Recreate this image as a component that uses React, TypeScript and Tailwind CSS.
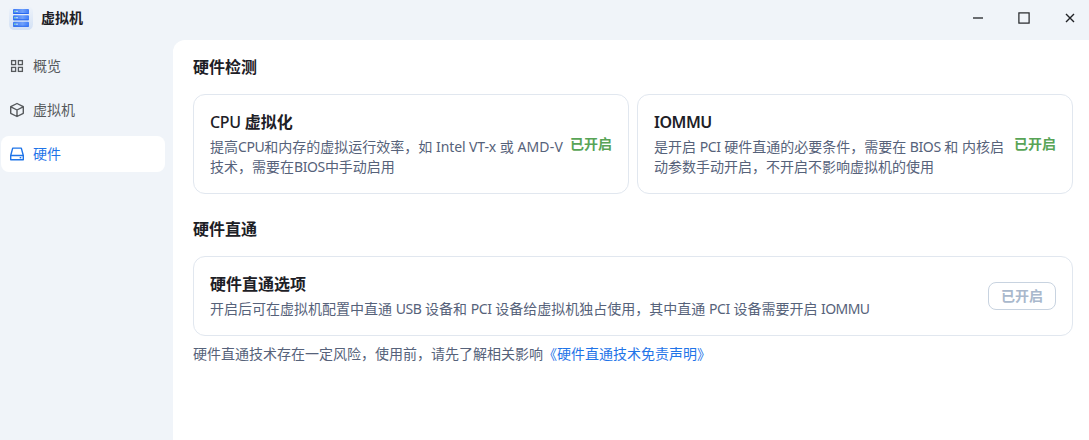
import type { ReactNode } from 'react';

const Latin = ({ children, className = '-tracking-[0.4px]' }: { children: ReactNode; className?: string }) => (
  <span className={`whitespace-nowrap ${className}`}>{children}</span>
);

function LogoIcon() {
  return (
    <svg className="size-6" viewBox="0 0 24 24">
      <defs>
        <linearGradient id="logo-bg" x1="0" y1="0" x2="0" y2="1">
          <stop offset="0" stopColor="#eef3fa" />
          <stop offset="1" stopColor="#d3e1f5" />
        </linearGradient>
        <linearGradient id="logo-bar" x1="0" y1="0" x2="1" y2="0">
          <stop offset="0" stopColor="#3c78f5" />
          <stop offset="0.6" stopColor="#6fa0fb" />
          <stop offset="1" stopColor="#3f7df8" />
        </linearGradient>
      </defs>
      <rect width="24" height="24" rx="5.5" fill="url(#logo-bg)" />
      {[3, 9.3, 15.8].map((y) => (
        <g key={y}>
          <rect x="4" y={y} width="16" height="4.9" rx="1" fill="url(#logo-bar)" />
          <rect x="4.2" y={y + 3.9} width="15.6" height="1" rx="0.5" fill="#2868f0" />
          <rect x="5.3" y={y + 1.7} width="1.4" height="1.4" fill="#8df0b0" />
          <rect x="7" y={y + 1.8} width="2" height="1.2" fill="#b9d1ff" />
        </g>
      ))}
    </svg>
  );
}

const GridIcon = () => (
  <svg className="size-4" viewBox="0 0 16 16" fill="none" stroke="currentColor" strokeWidth="1.3">
    <rect x="2.6" y="2.6" width="4" height="4" />
    <rect x="9.4" y="2.6" width="4" height="4" />
    <rect x="2.6" y="9.4" width="4" height="4" />
    <rect x="9.4" y="9.4" width="4" height="4" />
  </svg>
);

const BoxIcon = () => (
  <svg className="size-4" viewBox="0 0 16 16" fill="none" stroke="currentColor" strokeWidth="1.4" strokeLinejoin="round">
    <path d="M8 1.5 14.3 4.7v6.6L8 14.5 1.7 11.3V4.7ZM1.9 4.8 8 8l6.1-3.2M8 8v6.4" />
  </svg>
);

const DriveIcon = () => (
  <svg className="size-4" viewBox="0 0 16 16" fill="none" stroke="currentColor" strokeWidth="1.4" strokeLinejoin="round">
    <path d="M3.7 2.1h8.6l2 7.4v4.2H1.7V9.5ZM1.7 9.5h12.6" />
    <path d="M10.7 11.7h1.6" />
  </svg>
);

function NavItem({ icon, label, active }: { icon: ReactNode; label: string; active?: boolean }) {
  return (
    <a
      className={`flex h-9 items-center gap-2 rounded-lg pl-2 text-sm ${
        active ? 'bg-white text-[#1f74e8]' : 'text-[#56595c]'
      }`}
    >
      {icon}
      <span>{label}</span>
    </a>
  );
}

function Card({ title, children, action }: { title: ReactNode; children: ReactNode; action: ReactNode }) {
  return (
    <section className="flex items-center justify-between rounded-xl border border-[#e1e7ef] px-4 pt-[15px] pb-4">
      <div className="min-w-0">
        <h3 className="mb-[3px] text-base leading-6 font-bold text-[#1d2026]">{title}</h3>
        <p className="text-sm leading-5 whitespace-nowrap text-[#56627a]">{children}</p>
      </div>
      {action}
    </section>
  );
}

const Enabled = () => <span className="shrink-0 text-sm leading-5 font-bold text-[#58a456]">已开启</span>;

export default function App() {
  return (
    <div className="flex h-[440px] w-full flex-col overflow-hidden bg-[#f0f4f9] font-['Noto_Sans','Noto_Sans_CJK_SC',sans-serif]">
      <header className="flex h-10 shrink-0 items-center pr-[11px] pl-[9px]">
        <div className="flex flex-1 items-center gap-2 pb-1">
          <LogoIcon />
          <h1 className="text-sm font-bold text-[#1d2026]">虚拟机</h1>
        </div>
        <div className="flex items-center gap-[30px] pb-1 text-[#202226]">
          <svg className="size-4" viewBox="0 0 16 16" fill="none" stroke="currentColor">
            <path d="M3 8h10" strokeWidth="1.3" />
          </svg>
          <svg className="size-4" viewBox="0 0 16 16" fill="none" stroke="currentColor">
            <rect x="2.9" y="2.9" width="10.2" height="10.2" strokeWidth="1.2" />
          </svg>
          <svg className="size-4" viewBox="0 0 16 16" fill="none" stroke="currentColor">
            <path d="m4 4 8 8M12 4l-8 8" strokeWidth="1.4" />
          </svg>
        </div>
      </header>
      <div className="flex min-h-0 flex-1">
        <nav className="flex w-[173px] shrink-0 flex-col gap-2 pt-2 pr-2 pl-px">
          <NavItem icon={<GridIcon />} label="概览" />
          <NavItem icon={<BoxIcon />} label="虚拟机" />
          <NavItem icon={<DriveIcon />} label="硬件" active />
        </nav>
        <main className="flex-1 rounded-tl-xl bg-white pt-[15px] pr-4 pl-5">
          <h2 className="mb-[15px] text-base leading-6 font-bold text-[#1d2026]">硬件检测</h2>
          <div className="grid grid-cols-2 gap-2">
            <Card
              title={<><Latin className="-tracking-[0.35px] font-medium">CPU</Latin> 虚拟化</>}
              action={<Enabled />}
            >
              提高<Latin className="-tracking-[0.4px]">CPU</Latin>和内存的虚拟运行效率，如{' '}
              <Latin className="-tracking-[0.1px]">Intel VT-x</Latin> 或{' '}
              <Latin className="tracking-[0.15px]">AMD-V</Latin>
              <br />
              技术，需要在<Latin>BIOS</Latin>中手动启用
            </Card>
            <Card
              title={<Latin className="-tracking-[0.5px] font-semibold">IOMMU</Latin>}
              action={<Enabled />}
            >
              是开启 <Latin>PCI</Latin> 硬件直通的必要条件，需要在 <Latin>BIOS</Latin> 和 内核启
              <br />
              动参数手动开启，不开启不影响虚拟机的使用
            </Card>
          </div>
          <h2 className="mt-[23px] mb-[15px] text-base leading-6 font-bold text-[#1d2026]">硬件直通</h2>
          <Card
            title="硬件直通选项"
            action={
              <button className="h-7 w-[68px] shrink-0 rounded-lg border border-[#c8d3e0] text-sm font-bold text-[#a9b8cc]">
                已开启
              </button>
            }
          >
            开启后可在虚拟机配置中直通 <Latin>USB</Latin> 设备和 <Latin>PCI</Latin> 设备给虚拟机独占使用，其中直通{' '}
            <Latin>PCI</Latin> 设备需要开启 <Latin className="-tracking-[0.6px]">IOMMU</Latin>
          </Card>
          <p className="mt-2 text-sm leading-5 text-[#56627a]">
            硬件直通技术存在一定风险，使用前，请先了解相关影响<a className="text-[#1f74e8]">《硬件直通技术免责声明》</a>
          </p>
        </main>
      </div>
    </div>
  );
}
